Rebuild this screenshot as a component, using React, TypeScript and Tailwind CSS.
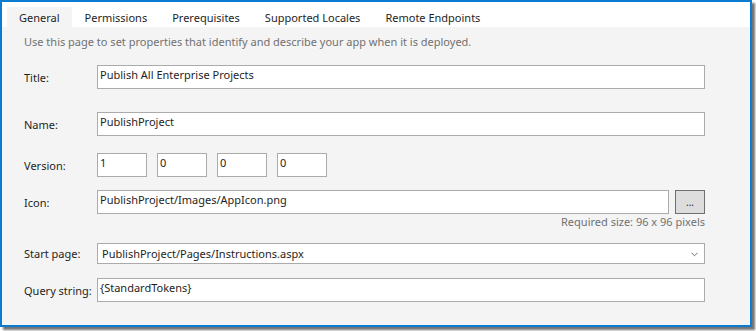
import React from 'react';

const tabs = ['General', 'Permissions', 'Prerequisites', 'Supported Locales', 'Remote Endpoints'];

const Field: React.FC<{ value: string; className?: string }> = ({ value, className = '' }) => (
  <div
    className={`h-[24px] bg-white border border-[#ababab] pl-[2px] leading-[17px] text-[#1e1e1e] whitespace-nowrap ${className}`}
  >
    {value}
  </div>
);

const Row: React.FC<{ label: string; className?: string; children: React.ReactNode }> = ({
  label,
  className = '',
  children,
}) => (
  <div className={`flex items-center ${className}`}>
    <span className="w-[73px] shrink-0 pt-[2px] text-[#1e1e1e] whitespace-nowrap">{label}</span>
    {children}
  </div>
);

export default function App() {
  return (
    <div className="w-[756px] h-[331px] bg-white font-['Noto_Sans',sans-serif] text-[11px]">
      <div className="w-[752px] h-[327px] flex flex-col border-2 border-[#0a7bd0] bg-[#f4f4f4] shadow-[3px_3px_2px_rgba(0,0,0,0.55)]">
        {/* Tab strip */}
        <div className="h-[25px] shrink-0 bg-white flex items-end gap-[1px] pl-[5px]">
          {tabs.map((t, i) => (
            <div
              key={t}
              className={`h-[20px] px-[12px] pt-[1px] leading-[20px] text-[#1e1e1e] whitespace-nowrap ${i === 0 ? 'bg-[#f4f4f4]' : ''}`}
            >
              {t}
            </div>
          ))}
        </div>

        <div className="flex flex-col pl-[22px] pr-[45px]">
          <p className="mt-[7px] text-[#717171] leading-[16px] whitespace-nowrap">
            Use this page to set properties that identify and describe your app when it is deployed.
          </p>

          <Row label="Title:" className="mt-[15px]">
            <Field value="Publish All Enterprise Projects" className="flex-1" />
          </Row>

          <Row label="Name:" className="mt-[23px]">
            <Field value="PublishProject" className="flex-1" />
          </Row>

          <Row label="Version:" className="mt-[17px]">
            <div className="flex gap-[10px]">
              {['1', '0', '0', '0'].map((v, i) => (
                <Field key={i} value={v} className="w-[50px]" />
              ))}
            </div>
          </Row>

          <Row label="Icon:" className="mt-[13px]">
            <Field value="PublishProject/Images/AppIcon.png" className="flex-1" />
            <button className="ml-[6px] w-[30px] h-[24px] bg-[#dddddd] border border-[#707070] text-[10px] leading-[14px] text-[#1e1e1e]">
              ...
            </button>
          </Row>
          <div className="self-end text-[#717171] leading-[14px] mt-[1px]">Required size: 96 x 96 pixels</div>

          <Row label="Start page:" className="mt-[14px]">
            <div className="flex-1 h-[21px] bg-white border border-[#ababab] pl-[4px] pr-[6px] flex items-center justify-between">
              <span className="text-[#1e1e1e] leading-[17px]">PublishProject/Pages/Instructions.aspx</span>
              <svg width="7" height="5" viewBox="0 0 7 5" className="mt-[1px]">
                <path d="M0.5 0.8 L3.5 3.8 L6.5 0.8" fill="none" stroke="#6d6d6d" strokeWidth="1" />
              </svg>
            </div>
          </Row>

          <Row label="Query string:" className="mt-[14px]">
            <Field value="{StandardTokens}" className="flex-1" />
          </Row>
        </div>
      </div>
    </div>
  );
}
